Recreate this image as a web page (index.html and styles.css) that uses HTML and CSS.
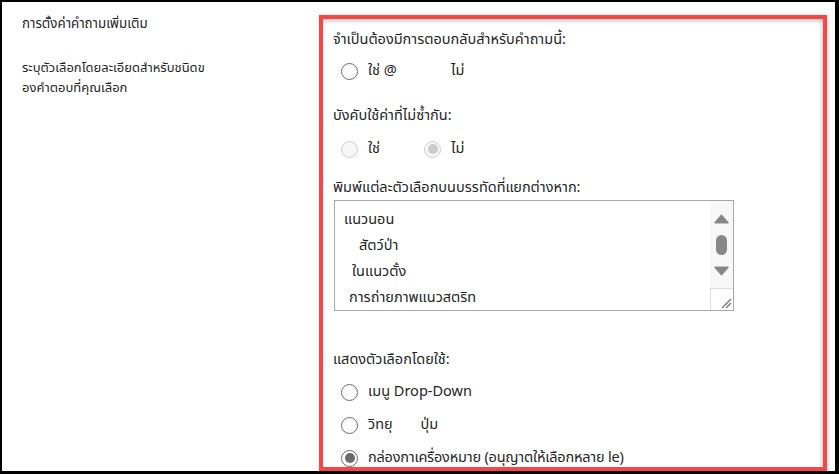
FILE: index.html
```html
<!DOCTYPE html>
<html lang="th">
<head>
<meta charset="utf-8">
<title>การตั้งค่าคำถามเพิ่มเติม</title>
<link rel="stylesheet" href="styles.css">
</head>
<body>
<div class="frame">
  <aside class="intro">
    <h1 class="intro-title">การตั้งค่าคำถามเพิ่มเติม</h1>
    <p class="intro-text">ระบุตัวเลือกโดยละเอียดสำหรับชนิดข<br>องคำตอบที่คุณเลือก</p>
  </aside>

  <section class="panel">
    <div class="field-label first">จำเป็นต้องมีการตอบกลับสำหรับคำถามนี้:</div>
    <div class="options row-1">
      <label class="option"><span class="radio"></span><span>ใช่ @</span></label>
      <label class="option"><span class="radio hidden"></span><span>ไม่</span></label>
    </div>

    <div class="field-label second">บังคับใช้ค่าที่ไม่ซ้ำกัน:</div>
    <div class="options row-2">
      <label class="option"><span class="radio disabled"></span><span>ใช่</span></label>
      <label class="option"><span class="radio disabled checked"></span><span>ไม่</span></label>
    </div>

    <div class="field-label third">พิมพ์แต่ละตัวเลือกบนบรรทัดที่แยกต่างหาก:</div>
    <div class="textbox">
      <div class="textbox-lines">
        <div class="line">แนวนอน</div>
        <div class="line indent-3">สัตว์ป่า</div>
        <div class="line indent-2">ในแนวตั้ง</div>
        <div class="line indent-1">การถ่ายภาพแนวสตริท</div>
      </div>
      <div class="scrollbar">
        <div class="scroll-track">
          <svg class="arrow" width="15" height="10" viewBox="0 0 15 10"><path d="M7.5 1.2 L14 8.8 H1 Z" fill="#878787" stroke="#878787" stroke-width="1.4" stroke-linejoin="round"/></svg>
          <div class="thumb"></div>
          <svg class="arrow down" width="15" height="10" viewBox="0 0 15 10"><path d="M1 1.2 H14 L7.5 8.8 Z" fill="#878787" stroke="#878787" stroke-width="1.4" stroke-linejoin="round"/></svg>
        </div>
        <div class="resizer">
          <svg width="12" height="12" viewBox="0 0 12 12"><path d="M2 11 L11 2 M6 11 L11 6" stroke="#6e6e6e" stroke-width="1.2" fill="none"/></svg>
        </div>
      </div>
    </div>

    <div class="field-label fourth">แสดงตัวเลือกโดยใช้:</div>
    <div class="stack">
      <label class="option"><span class="radio"></span><span>เมนู Drop-Down</span></label>
      <label class="option"><span class="radio"></span><span>วิทยุ<span class="gap"></span>ปุ่ม</span></label>
      <label class="option"><span class="radio checked"></span><span class="tight">กล่องกาเครื่องหมาย (อนุญาตให้เลือกหลาย le)</span></label>
    </div>
  </section>
</div>
</body>
</html>
```

FILE: styles.css
```css
* { box-sizing: border-box; }

html, body {
  margin: 0;
  padding: 0;
  background: #000;
}

body {
  font-family: "Tahoma", "Noto Sans Thai", "Leelawadee UI", "Loma", "Garuda", "Liberation Sans", sans-serif;
  color: #1f1f1f;
}

.frame {
  width: 839px;
  height: 474px;
  background: #fff;
  border-style: solid;
  border-color: #000;
  border-width: 2px 4px 3px 2px;
  display: flex;
  align-items: stretch;
  overflow: hidden;
}

.intro {
  width: 317px;
  flex: none;
  padding: 12px 0 0 20px;
}

.intro-title {
  margin: 0;
  font-size: 13.3px;
  font-weight: normal;
  line-height: 20px;
}

.intro-text {
  margin: 24px 0 0 0;
  font-size: 13px;
  line-height: 20px;
}

.panel {
  width: 508px;
  flex: none;
  margin-top: 13px;
  border: 4px solid #f44848;
  padding: 11px 0 0 10px;
  overflow: hidden;
  box-shadow:
    inset 0 4px 4px -2px rgba(0, 0, 0, 0.22),
    inset -4px 0 4px -2px rgba(0, 0, 0, 0.14),
    -2px 0 4px rgba(0, 0, 0, 0.06),
    2px 0 3px rgba(0, 0, 0, 0.12);
}

.field-label {
  font-size: 14.5px;
  line-height: 20px;
  height: 20px;
  white-space: nowrap;
}

.field-label.second { margin-top: 25px; }
.field-label.third { margin-top: 19px; }
.field-label.fourth { margin-top: 39px; }

.options {
  display: grid;
  grid-template-columns: 83px auto;
  justify-content: start;
  margin-left: 8px;
}

.options.row-1 { margin-top: 11px; }
.options.row-2 { margin-top: 13px; }

.option {
  display: flex;
  align-items: center;
  gap: 10px;
  height: 20px;
  font-size: 14.5px;
  line-height: 20px;
  white-space: nowrap;
}

.tight { letter-spacing: -0.2px; }

.radio {
  width: 17px;
  height: 17px;
  flex: none;
  border-radius: 50%;
  border: 1.6px solid #6b6b6b;
  background: #fff;
  position: relative;
}

.radio.checked::after {
  content: "";
  position: absolute;
  inset: 2.5px;
  border-radius: 50%;
  background: #6b6b6b;
}

.radio.disabled {
  border-color: #cfcfcf;
  background: #f6f6f6;
}

.radio.disabled.checked::after {
  background: #cbcbcb;
}

.radio.hidden {
  visibility: hidden;
}

.gap {
  display: inline-block;
  width: 28px;
}

.textbox {
  margin: 2px 0 0 1px;
  width: 400px;
  height: 111px;
  border: 1px solid #a8a8a8;
  display: flex;
  background: #fff;
}

.textbox-lines {
  flex: 1;
  padding: 6px 0 0 9px;
  font-size: 14.5px;
  line-height: 26px;
  overflow: hidden;
}

.line { white-space: nowrap; height: 26px; }
.indent-1 { padding-left: 5px; }
.indent-2 { padding-left: 8px; }
.indent-3 { padding-left: 15px; }

.scrollbar {
  width: 23px;
  flex: none;
  display: flex;
  flex-direction: column;
  background: #f8f8f8;
}

.scroll-track {
  flex: 1;
  display: flex;
  flex-direction: column;
  align-items: center;
  padding-top: 13px;
}

.arrow { display: block; }

.thumb {
  width: 11px;
  height: 20px;
  border-radius: 6px;
  background: #878787;
  margin-top: 11px;
}

.arrow.down { margin-top: 11px; }

.resizer {
  height: 22px;
  border-top: 1px solid #dedede;
  border-left: 1px solid #dedede;
  background: #fff;
  display: flex;
  align-items: flex-end;
  justify-content: flex-end;
  padding: 0 1px 1px 0;
}

.resizer svg { display: block; }

.stack {
  margin: 12px 0 0 8px;
  display: flex;
  flex-direction: column;
  gap: 13px;
}
```
